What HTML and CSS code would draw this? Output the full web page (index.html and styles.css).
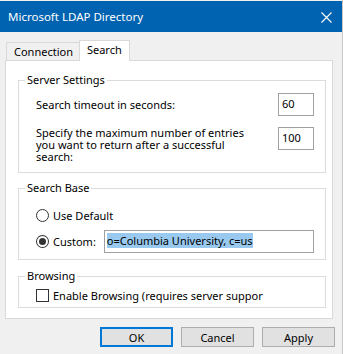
FILE: index.html
```html
<!DOCTYPE html>
<html lang="en">
<head>
    <meta charset="UTF-8">
    <meta name="viewport" content="width=device-width, initial-scale=1.0">
    <title>Microsoft LDAP Directory</title>
    <link rel="stylesheet" href="styles.css">
</head>
<body>
    <div class="window">
        <div class="titlebar">
            <span class="title">Microsoft LDAP Directory</span>
            <svg class="close" width="11" height="11" viewBox="0 0 11 11">
                <path d="M0.5 0.5 L10.5 10.5 M10.5 0.5 L0.5 10.5" stroke="#fff" stroke-width="1.1" fill="none"/>
            </svg>
        </div>

        <div class="tabs">
            <div class="tab">Connection</div>
            <div class="tab active">Search</div>
        </div>

        <div class="panel">
            <fieldset class="group server">
                <legend>Server Settings</legend>
                <div class="row">
                    <span class="label">Search timeout in seconds:</span>
                    <div class="textbox num">60</div>
                </div>
                <div class="row multi">
                    <span class="label wrap">Specify the maximum number of entries you want to return after a successful search:</span>
                    <div class="textbox num">100</div>
                </div>
            </fieldset>

            <fieldset class="group base">
                <legend>Search Base</legend>
                <div class="row">
                    <span class="radio"></span>
                    <span class="label">Use Default</span>
                </div>
                <div class="row">
                    <span class="radio checked"></span>
                    <span class="label custom">Custom:</span>
                    <div class="textbox wide"><span class="selected">o=Columbia University, c=us</span></div>
                </div>
            </fieldset>

            <fieldset class="group browsing">
                <legend>Browsing</legend>
                <div class="row">
                    <span class="check"></span>
                    <span class="label">Enable Browsing (requires server suppor</span>
                </div>
            </fieldset>
        </div>

        <div class="buttons">
            <button class="button default">OK</button>
            <button class="button">Cancel</button>
            <button class="button">Apply</button>
        </div>
    </div>
</body>
</html>
```

FILE: styles.css
```css
body {
    margin: 0;
    padding: 0;
    background: #f0f0f0;
    font-family: "Noto Sans", sans-serif;
    font-size: 11px;
    color: #000;
}
.window {
    width: 343px;
    height: 354px;
    box-sizing: border-box;
    padding-top: 1px;
    border-right: 1px solid #c8c8c8;
}
.titlebar {
    height: 31px;
    background: #0063b1;
    display: flex;
    align-items: center;
    justify-content: space-between;
    padding: 0 10px 0 8px;
}
.title {
    color: #fff;
    font-size: 11.5px;
}
.close {
    margin-top: 1px;
}
.tabs {
    display: flex;
    align-items: flex-end;
    margin-top: 7px;
    padding-left: 6px;
    height: 21px;
}
.tab {
    height: 17px;
    line-height: 18px;
    padding: 0 6px 0 7px;
    border: 1px solid #d9d9d9;
    border-bottom: none;
    background: #f0f0f0;
}
.tab.active {
    height: 20px;
    line-height: 17px;
    padding: 0 7px;
    background: #fff;
    margin-left: -1px;
    margin-bottom: -1px;
    position: relative;
}
.panel {
    margin: 0 9px 0 5px;
    height: 259px;
    box-sizing: border-box;
    background: #fff;
    border: 1px solid #d9d9d9;
    padding: 11px 6px 0 12px;
}
.group {
    margin: 0;
    min-width: 0;
    border: 1px solid #dcdcdc;
    padding: 0 11px 0 6px;
}
.group legend {
    padding: 0 2px;
    line-height: 16px;
}
.row {
    display: flex;
    align-items: center;
    padding-left: 11px;
}
.label {
    white-space: nowrap;
}
.textbox {
    height: 23px;
    box-sizing: border-box;
    border: 1px solid #a0a0a0;
    background: #fff;
    padding: 1px 3px;
    line-height: 18px;
}
.num {
    width: 36px;
    margin-left: auto;
}
.server {
    padding-bottom: 9px;
}
.server .row:first-of-type {
    margin-top: 5px;
}
.server .multi {
    align-items: flex-start;
    margin-top: 11px;
}
.label.wrap {
    white-space: normal;
    width: 215px;
    line-height: 12px;
}
.base {
    margin-top: 7px;
    padding-bottom: 6px;
}
.base .row:first-of-type {
    margin-top: 11px;
    height: 16px;
}
.base .row + .row {
    margin-top: 7px;
}
.radio {
    width: 13px;
    height: 13px;
    box-sizing: border-box;
    border: 1px solid #333;
    border-radius: 50%;
    margin-right: 4px;
    display: flex;
    align-items: center;
    justify-content: center;
}
.radio.checked::after {
    content: "";
    width: 7px;
    height: 7px;
    border-radius: 50%;
    background: #333;
}
.custom {
    width: 51px;
}
.wide {
    width: 211px;
    padding-left: 2px;
}
.selected {
    background: #99c9ef;
}
.browsing {
    margin-top: 8px;
    padding-bottom: 4px;
}
.browsing .row {
    margin-top: 3px;
    height: 16px;
}
.check {
    width: 13px;
    height: 13px;
    box-sizing: border-box;
    border: 1px solid #333;
    margin-right: 4px;
}
.buttons {
    display: flex;
    justify-content: flex-end;
    gap: 8px;
    margin-top: 8px;
    padding-right: 7px;
}
.button {
    width: 73px;
    height: 20px;
    box-sizing: border-box;
    background: #e1e1e1;
    border: 1px solid #adadad;
    font-family: "Noto Sans", sans-serif;
    font-size: 11px;
    padding: 0;
    color: #000;
}
.button.default {
    border: 2px solid #0078d7;
}
```
